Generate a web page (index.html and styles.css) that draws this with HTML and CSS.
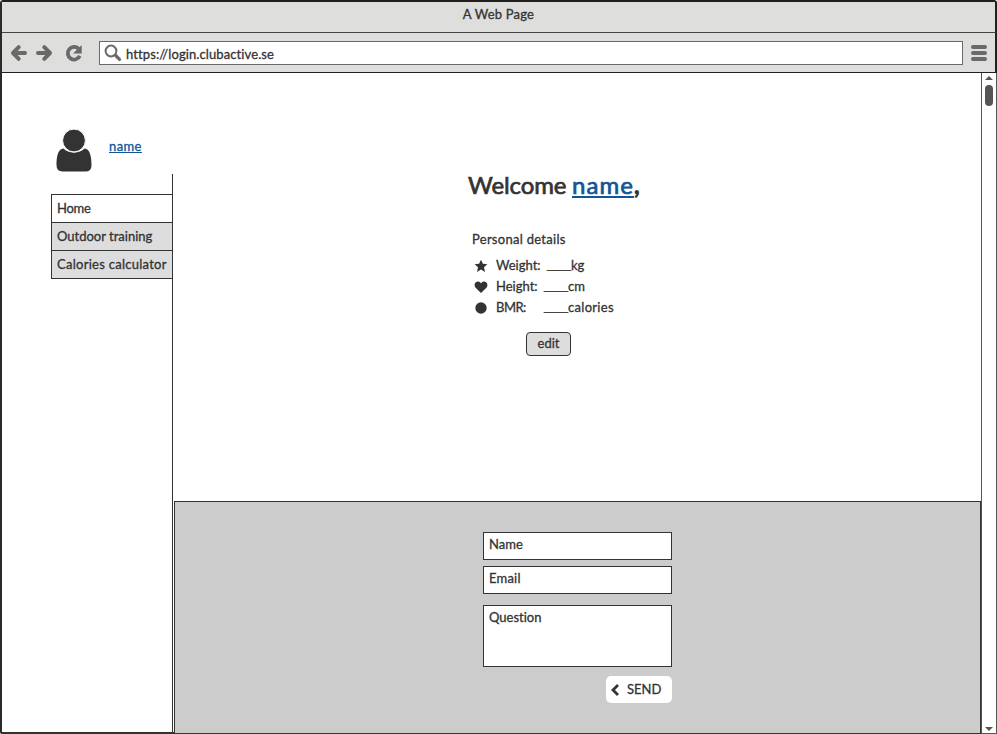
FILE: index.html
```html
<!DOCTYPE html>
<html lang="en">
<head>
<meta charset="utf-8">
<title>A Web Page</title>
<link rel="stylesheet" href="styles.css">
</head>
<body>
<div class="window">
  <header class="titlebar"><span class="t-title">A Web Page</span></header>
  <div class="toolbar">
    <svg class="nav-icons" width="84" height="20" viewBox="0 0 84 20" fill="none" stroke="#696969" stroke-width="4" stroke-linecap="round" stroke-linejoin="round">
      <path d="M9.700 4.200L4 10l5.700 5.800M5 10h11"/>
      <path d="M35.300 4.200L41 10l-5.700 5.800M40 10H29"/>
      <path d="M69.500 5.700A6.300 6.300 0 1 0 70.800 12.900" stroke-width="3.800" stroke-linecap="butt"/>
      <path d="M72.700 2v8.400h-8.700z" fill="#696969" stroke="none"/>
    </svg>
    <div class="address">
      <svg width="18" height="18" viewBox="0 0 18 18" fill="none" stroke="#696969"><circle cx="7" cy="7" r="5.400" stroke-width="2"/><path d="M11.700 11.500l3.800 3.800" stroke-width="3.200" stroke-linecap="round"/></svg>
      <span class="t-url">https://login.clubactive.se</span>
    </div>
    <svg class="menu" width="16" height="16" viewBox="0 0 16 16" fill="#696969"><rect width="16" height="4" rx="2"/><rect y="6" width="16" height="4" rx="2"/><rect y="12" width="16" height="4" rx="2"/></svg>
  </div>
  <div class="page">
    <aside class="sidebar">
      <div class="profile">
        <svg width="36" height="43" viewBox="0 0 36 43" fill="#333"><path d="M7.500 19.500C1.500 20 .500 29 .500 36q0 6.500 6 6.500h23q6 0 6-6C35.500 29 34.500 20 28.500 19.500 24 25 12 25 7.500 19.500z"/><circle cx="18" cy="11.500" r="11.400" stroke="#fff"/></svg>
        <a class="t-name" href="#">name</a>
      </div>
      <nav class="tabs">
        <a class="tab active" href="#"><span class="t-home">Home</span></a>
        <a class="tab" href="#"><span class="t-outdoor">Outdoor training</span></a>
        <a class="tab" href="#"><span class="t-calc">Calories calculator</span></a>
      </nav>
    </aside>
    <div class="divider"></div>
    <main class="content">
      <section class="intro">
        <h1><span class="t-welcome">Welcome</span><a class="t-bigname" href="#">name</a><span class="comma">,</span></h1>
        <h2><span class="t-personal">Personal details</span></h2>
        <ul class="details">
          <li><svg width="14" height="14" viewBox="0 0 14 14" fill="#333"><path d="M7 .700l1.900 4.100 4.500.500-3.400 3 1 4.600L7 10.600 3 12.900l1-4.600-3.400-3 4.500-.500z"/></svg><span class="label">Weight:</span><span class="blank kg"><i>____</i><span>kg</span></span></li>
          <li><svg width="14" height="14" viewBox="0 0 14 14" fill="#333"><path d="M7 13L1.600 7.700C-.300 5.600.500 2 3.600 1.600 5.200 1.400 6.400 2.200 7 3.500 7.600 2.200 8.800 1.400 10.400 1.600 13.500 2 14.300 5.600 12.400 7.700z"/></svg><span class="label">Height:</span><span class="blank"><i>____</i><span>cm</span></span></li>
          <li><svg width="14" height="14" viewBox="0 0 14 14" fill="#333"><circle cx="7" cy="7" r="5.700"/></svg><span class="label t-bmr">BMR:</span><span class="blank"><i>____</i><span class="t-cal">calories</span></span></li>
        </ul>
        <button class="edit" type="button">edit</button>
      </section>
      <form class="contact">
        <div class="field"><span>Name</span></div>
        <div class="field email"><span class="t-email">Email</span></div>
        <div class="field question"><span>Question</span></div>
        <button class="send" type="button"><svg width="10" height="12" viewBox="0 0 10 12" fill="none" stroke="#333" stroke-width="2.800"><path d="M8 1L3 6l5 5"/></svg><span>SEND</span></button>
      </form>
    </main>
    <div class="scrollbar">
      <svg width="8" height="4" viewBox="0 0 8 4" fill="#555"><path d="M0 4L4 0l4 4z"/></svg>
      <div class="thumb"></div>
      <svg class="down" width="8" height="4" viewBox="0 0 8 4" fill="#555"><path d="M0 0h8L4 4z"/></svg>
    </div>
  </div>
</div>
</body>
</html>
```
FILE: styles.css
```css
* { box-sizing: border-box; }
body {
  margin: 0;
  background: #fff;
  color: #333;
  font: 13px/16px Lato, "Open Sans", sans-serif;
  font-variant-ligatures: none;
  -webkit-text-stroke: 0.3px currentColor;
  overflow: hidden;
}
span, a { white-space: nowrap; }
a { color: #0f5597; text-underline-offset: 1px; }
.window {
  width: 997px;
  height: 734px;
  display: flex;
  flex-direction: column;
  border-left: 2px solid #2b292a;
  border-top: 2px solid #231f20;
  border-radius: 3px 3px 0 2px;
}
.titlebar {
  height: 31px;
  padding-top: 4px;
  text-align: center;
  letter-spacing: 0.2px;
  background: #dededc;
  border-bottom: 1px solid #444;
  border-right: 2px solid #231f20;
}
.toolbar {
  height: 40px;
  display: flex;
  align-items: center;
  background: #dededc;
  border-bottom: 1px solid #231f20;
  border-right: 2px solid #231f20;
  padding: 0 8px 0 7px;
}
.nav-icons { margin-right: 6px; }
.address {
  flex: 1;
  height: 24px;
  display: flex;
  align-items: center;
  gap: 4px;
  padding-left: 4px;
  background: #fff;
  border: 1px solid #696969;
}
.address span { padding-top: 3px; }
.t-url { letter-spacing: 0.1px; }
.menu { margin-left: 8px; }
.page { flex: 1; display: flex; min-height: 0; }
.sidebar { width: 170px; padding: 56px 0 0 49px; border-bottom: 2px solid #333; }
.profile { display: flex; gap: 17px; padding-left: 5px; height: 65px; }
.profile a { margin-top: 9px; letter-spacing: 0.4px; }
.tabs { border: 1px solid #333; border-right: 0; }
.tab {
  display: block;
  height: 28px;
  padding: 5px 0 0 5px;
  background: #ddd;
  color: #333;
  text-decoration: none;
  border-bottom: 1px solid #333;
}
.tab:last-child { height: 27px; border-bottom: 0; }
.tab.active { background: #fff; }
.t-home { letter-spacing: -0.3px; }
.t-calc { letter-spacing: 0.27px; }
.divider { width: 2px; margin-top: 101px; border-left: 1px solid #333; border-bottom: 2px solid #333; }
.content { width: 807px; display: flex; flex-direction: column; }
.intro { height: 428px; padding: 97px 0 0 294px; }
h1 { display: flex; height: 30px; margin: 0; font-size: 24px; line-height: 30px; font-weight: 400; -webkit-text-stroke: 0.7px currentColor; }
.t-welcome { width: 104px; letter-spacing: -0.1px; }
.t-bigname { width: 62px; letter-spacing: 1.1px; text-underline-offset: 2px; text-decoration-thickness: 2px; }
.comma { font-weight: 700; }
h2 { margin: 31px 0 8px 4px; font-size: 13px; line-height: 16px; font-weight: 400; }
.t-personal { letter-spacing: 0.28px; }
.details { list-style: none; margin: 0; padding: 0 0 0 6px; }
.details li { display: flex; height: 21px; line-height: 21px; }
.details svg { margin: 4px 8px 0 0; }
.label { width: 48px; }
.t-bmr { letter-spacing: -0.5px; }
.t-cal { letter-spacing: 0.3px; }
.blank { display: flex; }
.kg { margin-left: 3px; }
.blank i { width: 24px; font: 10.8px/21px "Liberation Sans", sans-serif; }
button { font: inherit; color: #333; -webkit-text-stroke: inherit; font-variant-ligatures: none; }
.edit {
  display: block;
  width: 45px;
  height: 24px;
  margin: 14px 0 0 58px;
  padding: 0 0 2px;
  background: #ddd;
  border: 1px solid #333;
  border-radius: 4px;
}
.contact { flex: 1; padding: 30px 0 0 308px; background: #ccc; border: 1px solid #333; }
.field { width: 189px; height: 28px; margin-bottom: 6px; padding: 3px 5px; background: #fff; border: 1px solid #333; }
.email { margin-bottom: 11px; }
.t-email { letter-spacing: 0.2px; }
.question { height: 62px; margin-bottom: 9px; }
.send {
  display: flex;
  align-items: center;
  gap: 7px;
  width: 66px;
  height: 27px;
  margin-left: 123px;
  padding: 0 4px;
  background: #fff;
  border: 0;
  border-radius: 5px;
}
.send span { padding-bottom: 1px; }
.scrollbar {
  width: 16px;
  display: flex;
  flex-direction: column;
  align-items: center;
  padding: 3px 0 2px;
  border: solid #555;
  border-width: 0 1px 1px;
}
.thumb { width: 8px; height: 21px; margin-top: 5px; border-radius: 4px; background: #555; }
.down { margin-top: auto; }
```
